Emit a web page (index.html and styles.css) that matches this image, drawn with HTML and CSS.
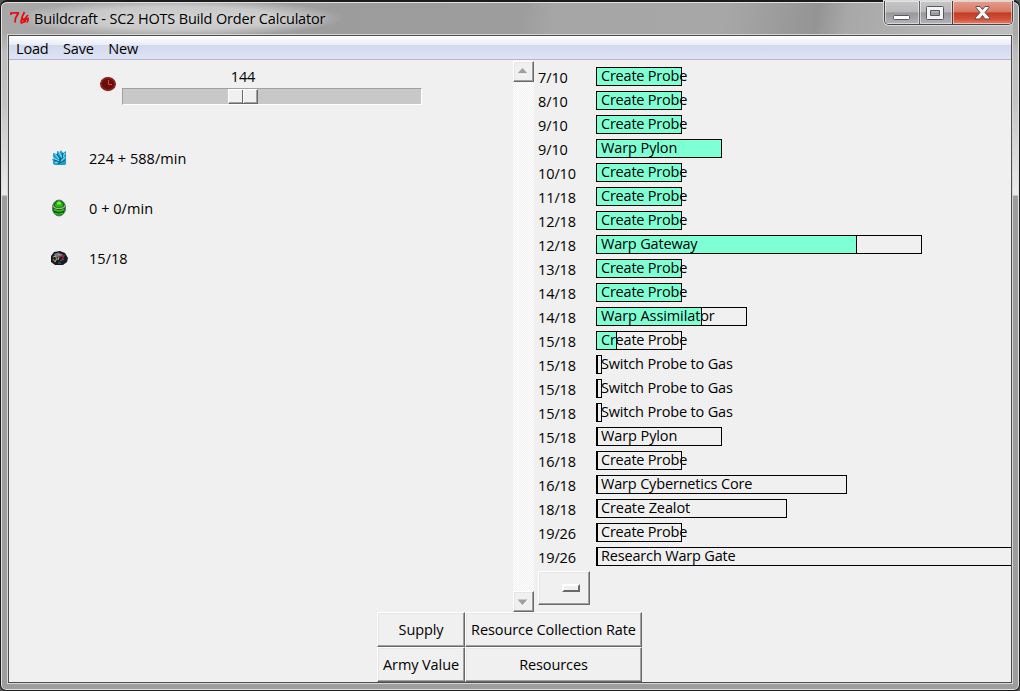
FILE: index.html
```
<!DOCTYPE html>
<html lang="en">
<head>
<meta charset="utf-8">
<title>Buildcraft - SC2 HOTS Build Order Calculator</title>
<link rel="stylesheet" href="styles.css">
</head>
<body>
<div class="window">
  <header class="titlebar">
    <svg class="logo" width="20" height="16" viewBox="0 0 20 16" fill="none" stroke="#e80808" stroke-width="1.7"><path d="M1 5V3l8-.2M8.500 3 5.500 8 5 12.500M14.500 2 12.500 6l-1.500 5.500.5 1.500 2.500-1V9l-2 .5M18 5l-2.500 3-.5 4.500M15.500 9.500l2.500-1v1.500l-1 2.500"/></svg>
    <h1 class="title">Buildcraft - SC2 HOTS Build Order Calculator</h1>
    <div class="controls">
      <div class="control minimize"><svg width="18" height="6" viewBox="0 0 18 6"><rect x=".5" y=".5" width="16" height="4" rx="1" fill="#fff" stroke="#555866"/></svg></div>
      <div class="control maximize"><svg width="18" height="14" viewBox="0 0 18 14"><path fill-rule="evenodd" d="M1.500.5h15q1 0 1 1v11q0 1-1 1h-15q-1 0-1-1v-11q0-1 1-1ZM4.500 4.500v5h9v-5Z" fill="#f3f3f3" stroke="#555866"/></svg></div>
      <div class="control close"><svg width="16" height="14" viewBox="0 0 16 14"><path d="M1 .5h4l2.500 3 2.500-3h4v1L10 6.500l4.500 5v1.500H10L7.500 9.500 5 13H.5v-1.500l4.500-5L1 1.500Z" fill="#f5f5f5" stroke="#5b4b55"/></svg></div>
    </div>
  </header>
  <div class="client">
    <nav class="menu"><span>Load</span><span>Save</span><span>New</span></nav>
    <main class="workspace">
      <section class="summary">
        <div class="time">
          <svg class="clock" width="16" height="14" viewBox="0 0 16 14"><ellipse cx="8" cy="7" rx="7.200" ry="6.300" fill="#6a0d0d" stroke="#982b25" stroke-width="1.600" /><ellipse cx="8" cy="7" rx="7.200" ry="6.300" fill="none" stroke="#601010" stroke-dasharray="1 2.500"/><path d="M8.500 3v4.500h3.500" fill="none" stroke="#c5534a"/></svg>
          <div class="scale">
            <div class="value">144</div>
            <div class="trough"><div class="thumb"><i></i><i></i></div></div>
          </div>
        </div>
        <div class="resource">
          <svg width="20" height="20" viewBox="0 0 20 20"><path d="m3 5 4 1V3l3 1 1-2 2 3 3-2v13l-1 1H5l-2-1v-3l-1-2h2L3 8Z" fill="#1f9cc9"/><path d="m5 6 4 5M9 4l3 6M15 5l-3 5M3 10l6 3M5 15l5-2M15 9l-4 5" stroke="#76dcf5" stroke-width="1.200"/><path d="m7 6 4 6M13 5l-1 6M4 12l6 2M8 16l7-4M10 9v6" stroke="#07577f"/></svg>
          <span>224 + 588/min</span>
        </div>
        <div class="resource">
          <svg width="20" height="20" viewBox="0 0 20 20"><ellipse cx="9" cy="10" rx="6.600" ry="8" fill="#176317" stroke="#547f70"/><path d="M5 6q4-6 8 0v2q-4 3-8 0Z" fill="#28b516"/><path d="M7 4.500q2-2 4 0v2H7Z" fill="#72ef2f"/><path d="M3 7.500q1 3 6 3t6-3" fill="none" stroke="#a3bb7e" stroke-width="1.200"/><path d="M4 11.500q5 3 10 0M5 15q4 2 8 0" fill="none" stroke="#36c417" stroke-width="1.500"/><path d="M4 13.500q5 3 10 0" fill="none" stroke="#09430d"/></svg>
          <span>0 + 0/min</span>
        </div>
        <div class="resource">
          <svg width="20" height="20" viewBox="0 0 20 20"><path d="m1 8 3-4 6-1 5 2 3 5-1 4-4 3H5l-4-3Z" fill="#171a24"/><path d="m4 6 4-1.500 5 2L10 8.500l-5 1Z" fill="#75777e"/><path d="m3 9 3-1M8 6.500l4 1M7 10l-2 4M9 9l-1 3" stroke="#a9a29b" stroke-width="1.100"/><path d="m10 8.500 4-1-2 4" fill="none" stroke="#a02438" stroke-width="1.300"/><path d="m3 11 2 3M6 9l1 3" stroke="#a48228" stroke-width="1.300"/><path d="m10 13 4-2M8 15h3" stroke="#5d6279"/></svg>
          <span>15/18</span>
        </div>
      </section>
      <div class="scrollbar">
        <div class="arrow raised"><svg width="11" height="7"><path d="m.5 5.500 5-5.500 5 5.500Z" fill="#a0a0a0"/><path d="M1 6h10" stroke="#fff"/></svg></div>
        <div class="arrow down raised"><svg width="12" height="7"><path d="m6 6.500 5-5.500" stroke="#fff"/><path d="M.5.5h10l-5 5.500Z" fill="#a0a0a0"/></svg></div>
      </div>
      <section class="orders">
        <div class="order"><span class="supply">7/10</span><div class="bar done w-probe"><span>Create Probe</span></div></div>
        <div class="order"><span class="supply">8/10</span><div class="bar done w-probe"><span>Create Probe</span></div></div>
        <div class="order"><span class="supply">9/10</span><div class="bar done w-probe"><span>Create Probe</span></div></div>
        <div class="order"><span class="supply">9/10</span><div class="bar done w-pylon"><span>Warp Pylon</span></div></div>
        <div class="order"><span class="supply">10/10</span><div class="bar done w-probe"><span>Create Probe</span></div></div>
        <div class="order"><span class="supply">11/18</span><div class="bar done w-probe"><span>Create Probe</span></div></div>
        <div class="order"><span class="supply">12/18</span><div class="bar done w-probe"><span>Create Probe</span></div></div>
        <div class="order"><span class="supply">12/18</span><div class="bar w-gateway"><div class="progress" style="width:261px"></div><span>Warp Gateway</span></div></div>
        <div class="order"><span class="supply">13/18</span><div class="bar done w-probe"><span>Create Probe</span></div></div>
        <div class="order"><span class="supply">14/18</span><div class="bar done w-probe"><span>Create Probe</span></div></div>
        <div class="order"><span class="supply">14/18</span><div class="bar w-assimilator"><div class="progress" style="width:106px"></div><span>Warp Assimilator</span></div></div>
        <div class="order"><span class="supply">15/18</span><div class="bar w-probe"><div class="progress" style="width:21px"></div><span>Create Probe</span></div></div>
        <div class="order"><span class="supply">15/18</span><div class="bar pending w-switch"><span>Switch Probe to Gas</span></div></div>
        <div class="order"><span class="supply">15/18</span><div class="bar pending w-switch"><span>Switch Probe to Gas</span></div></div>
        <div class="order"><span class="supply">15/18</span><div class="bar pending w-switch"><span>Switch Probe to Gas</span></div></div>
        <div class="order"><span class="supply">15/18</span><div class="bar pending w-pylon"><span>Warp Pylon</span></div></div>
        <div class="order"><span class="supply">16/18</span><div class="bar pending w-probe"><span>Create Probe</span></div></div>
        <div class="order"><span class="supply">16/18</span><div class="bar pending w-core"><span>Warp Cybernetics Core</span></div></div>
        <div class="order"><span class="supply">18/18</span><div class="bar pending w-zealot"><span>Create Zealot</span></div></div>
        <div class="order"><span class="supply">19/26</span><div class="bar pending w-probe"><span>Create Probe</span></div></div>
        <div class="order"><span class="supply">19/26</span><div class="bar pending w-research"><span>Research Warp Gate</span></div></div>
        <div class="option raised"><div class="indicator"></div></div>
      </section>
    </main>
    <footer class="charts">
      <div class="chart raised">Supply</div><div class="chart raised">Resource Collection Rate</div>
      <div class="chart raised">Army Value</div><div class="chart raised">Resources</div>
    </footer>
  </div>
</div>
</body>
</html>
```
FILE: styles.css
```
* { box-sizing: border-box; }
body {
  margin: 0;
  background: #555;
  font-family: "Open Sans", "Noto Sans", sans-serif;
  font-size: 14.5px;
  letter-spacing: -0.17px;
  line-height: 20px;
  color: #000;
}
svg { display: block; }
.window {
  width: 1020px;
  height: 691px;
  padding: 0 6px 6px;
  border: 1px solid #1c1c1c;
  border-top-width: 2px;
  border-radius: 7px 7px 6px 6px;
  box-shadow: inset 0 0 0 1px #e0e0e0;
  background: linear-gradient(#a5a5a5 0, #aaa 32px, #bdbdbd 50px, #c4c4c4 100px, #ebebeb 193px, #9d9d9d 194px, #9d9d9d 100%);
}
.titlebar {
  height: 32px;
  display: flex;
  align-items: flex-start;
  background:
    radial-gradient(ellipse 165px 19px at 172px 15px, #d0d0d0 0, #c9c9c9 60%, #c9c9c900 100%),
    linear-gradient(100deg, #a8a8a8 0, #9c9c9c 330px, #9d9d9d 510px, #a6a6a6 540px, #a7a7a7 710px, #949494 800px, #a8a8a8 830px, #bebebe 100%);
  margin-top: 1px;
}
.logo { margin: 7px 0 0 3px; }
.title {
  margin: 6px 0 0 4px;
  font-size: 14.5px;
  font-weight: 400;
  line-height: 20px;
  white-space: nowrap;
  text-shadow: 0 0 6px #fff8;
}
.controls {
  display: flex;
  width: 129px;
  height: 24px;
  margin: -2px 0 0 auto;
  border: 1px solid #44464b;
  border-top: 0;
  border-radius: 0 0 5px 5px;
  box-shadow: 0 0 0 1px #dadada;
  overflow: hidden;
}
.control {
  display: flex;
  justify-content: center;
  box-shadow: inset 0 0 0 1px #ffffff80;
  background: linear-gradient(#c6c6c6 0, #b8b8b8 47%, #989898 52%, #b2b2ba 100%);
}
.minimize { width: 35px; padding-top: 14px; border-right: 1px solid #606268; }
.maximize { width: 33px; padding: 5px 2px 0 0; border-right: 1px solid #58383a; }
.close { flex: 1; padding-top: 5px; background: linear-gradient(#e59c8c 0, #d77965 47%, #c13b23 52%, #d4523a 80%, #df8570 100%); }
.client {
  width: 1004px;
  height: 648px;
  margin-left: 1px;
  border: 1px solid #4d4d4d;
  box-shadow: 0 0 0 1px #d6d6d6;
  background: #f0f0f0;
}
.menu {
  display: flex;
  gap: 14.5px;
  height: 24px;
  padding: 3px 7px 0;
  border-bottom: 1px solid #b1b6ce;
  background: linear-gradient(#fff 0, #e8ecf5 9px, #d2d9ec 9px, #dfe4f5 100%);
}
.workspace { display: flex; height: 552px; overflow: hidden; }
.summary { width: 504px; }
.time { display: flex; height: 73px; padding: 7px 0 0 91px; }
.clock { margin-top: 10px; }
.scale { width: 300px; margin-left: 6px; }
.value { width: 30px; margin-left: 106px; height: 21px; text-align: center; }
.trough {
  height: 17px;
  padding-left: 105px;
  border: 1px solid;
  border-color: #a0a0a0 #fff #fff #a0a0a0;
  background: #c8c8c8;
}
.thumb {
  display: flex;
  width: 30px;
  height: 15px;
  border: 1px solid;
  border-color: #fff #696969 #696969 #fff;
  box-shadow: inset -1px -1px #a0a0a0;
  background: #f0f0f0;
}
.thumb i { flex: 1; }
.thumb i:first-child { border-right: 1px solid #696969; }
.thumb i:last-child { border-left: 1px solid #fff; }
.resource { display: flex; align-items: center; gap: 19px; height: 50px; padding-left: 41px; letter-spacing: 0.04px; }
.resource span { padding-top: 2px; }
.raised {
  border: 1px solid;
  border-color: #fff #696969 #696969 #fff;
  box-shadow: inset -1px -1px #a0a0a0, inset 1px 1px #e6e6e6;
  background: #f0f0f0;
}
.scrollbar {
  display: flex;
  flex-direction: column;
  justify-content: space-between;
  width: 21px;
  padding-top: 1px;
  background: repeating-conic-gradient(#fff 0 25%, #f0f0f0 0 50%) 0 0 / 2px 2px;
}
.arrow { display: flex; align-items: center; justify-content: center; height: 21px; padding-right: 2px; }
.down { padding: 2px 1px 0 0; }
.orders { flex: 1; min-width: 0; padding: 7px 0 0 4px; }
.order { display: flex; height: 24px; }
.supply { flex: none; width: 58px; padding-top: 1px; letter-spacing: -0.1px; }
.bar {
  position: relative;
  flex: none;
  height: 19px;
  border: 1px solid #000;
  line-height: 15px;
  padding-left: 4px;
  white-space: nowrap;
}
.bar span { position: relative; }
.w-probe span { letter-spacing: -0.22px; }
.w-pylon span, .w-zealot span, .w-assimilator span { letter-spacing: -0.1px; }
.pending { border-left-width: 2px; padding-left: 3px; }
.done, .progress { background: #7fffd4; }
.progress { position: absolute; left: -1px; top: -1px; height: 19px; border: 1px solid #000; }
.w-probe { width: 86px; }
.w-pylon { width: 126px; }
.w-gateway { width: 326px; }
.w-assimilator { width: 151px; }
.w-switch { width: 6px; }
.w-core { width: 251px; }
.w-zealot { width: 191px; }
.w-research { width: 430px; }
.option { display: flex; width: 52px; height: 34px; padding: 12px 0 0 23px; }
.indicator {
  width: 18px;
  height: 8px;
  border: 2px solid;
  border-color: #fff #696969 #696969 #fff;
  background: #f0f0f0;
}
.charts { display: grid; grid-template-columns: 88px 177px; grid-template-rows: 35px 35px; margin-left: 368px; }
.chart { display: flex; align-items: center; justify-content: center; white-space: nowrap; letter-spacing: -0.1px; }
```
